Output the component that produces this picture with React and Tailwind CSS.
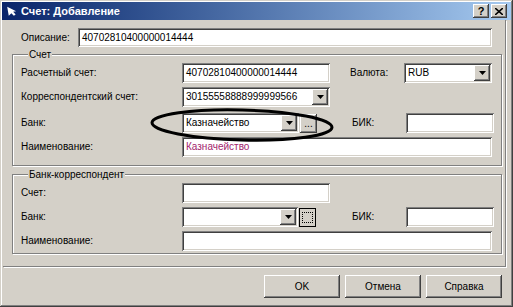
import React from 'react';

const sunken = 'bg-white shadow-[inset_1px_1px_0_#808080,inset_-1px_-1px_0_#fff,inset_2px_2px_0_#404040,inset_-2px_-2px_0_#d4d0c8]';
const raised = 'bg-[#d4d0c8] shadow-[inset_-1px_-1px_0_#404040,inset_1px_1px_0_#fff,inset_-2px_-2px_0_#808080]';

const Field = ({ value = '', className = '', textClass = 'text-black' }) => (
    <div className={`${sunken} h-[20px] flex items-center pl-[4px] ${className}`}>
        <span className={`text-[10px] leading-none ${textClass}`}>{value}</span>
    </div>
);

const Arrow = () => (
    <div className={`${raised} w-[16px] h-[16px] flex items-center justify-center shrink-0`}>
        <svg width="7" height="4" viewBox="0 0 7 4"><path d="M0 0h7L3.5 4z" fill="#000" /></svg>
    </div>
);

const Combo = ({ value = '', className = '' }) => (
    <div className={`${sunken} h-[20px] flex items-center pl-[4px] pr-[2px] ${className}`}>
        <span className="text-[10px] leading-none flex-1">{value}</span>
        <Arrow />
    </div>
);

const Label = ({ children, className = 'w-[161px]' }) => (
    <span className={`text-[10px] leading-none text-black shrink-0 ${className}`}>{children}</span>
);

const Group = ({ title, children, className = '' }) => (
    <fieldset className={`border border-[#808080] shadow-[inset_1px_1px_0_#fff,1px_1px_0_#fff] w-[488px] pl-[8px] pr-[7px] ${className}`}>
        <legend className="ml-[7px] px-px bg-[#d4d0c8] text-[10px] leading-[13px] text-black">{title}</legend>
        {children}
    </fieldset>
);

const Button = ({ children }) => (
    <div className={`${raised} w-[76px] h-[23px] flex items-center justify-center text-[10px] text-black`}>{children}</div>
);

export default function App() {
    return (
        <div className="w-[513px] h-[307px] bg-[#d4d0c8] relative overflow-hidden flex flex-col shadow-[inset_-1px_-1px_0_#404040,inset_1px_1px_0_#d4d0c8,inset_-2px_-2px_0_#808080,inset_2px_2px_0_#fff]" style={{ fontFamily: '"Liberation Sans", Arial, sans-serif' }}>
            {/* Title bar */}
            <div className="mx-[2px] mt-[2px] h-[18px] shrink-0 bg-gradient-to-r from-[#0a246a] to-[#a6caf0] flex items-center pl-[5px] pr-[4px]">
                <svg width="10" height="10" viewBox="0 0 10 10" className="shrink-0">
                    <path d="M1 0 L9 6 L6 6 L8 9 L6 10 L4 7 L1 9 Z" fill="#fff" transform="rotate(-10 5 5)" />
                </svg>
                <span className="ml-[4px] text-[11px] font-bold text-white flex-1">Счет: Добавление</span>
                <div className="flex gap-[2px]">
                    <div className={`${raised} w-[16px] h-[14px] flex items-center justify-center text-[11px] font-bold leading-none`}>?</div>
                    <div className={`${raised} w-[16px] h-[14px] flex items-center justify-center`}>
                        <svg width="8" height="7" viewBox="0 0 8 7"><path d="M0 0l8 7M8 0L0 7" stroke="#000" strokeWidth="1.6" /></svg>
                    </div>
                </div>
            </div>

            {/* Main panel */}
            <div className="ml-[3px] w-[503px] h-[247px] shrink-0 border-r border-b border-[#808080] shadow-[1px_1px_0_#fff] pl-[9px] pt-[8px]">
                <div className="flex items-center h-[19px]">
                    <Label className="w-[66px] pl-[9px]">Описание:</Label>
                    <Field value="40702810400000014444" className="w-[414px] !h-[19px]" />
                </div>

                <Group title="Счет" className="mt-[1px] pt-[2px] pb-[8px]">
                    <div className="flex items-center h-[20px]">
                        <Label>Расчетный счет:</Label>
                        <Field value="40702810400000014444" className="w-[148px]" />
                        <Label className="w-[54px] ml-[20px]">Валюта:</Label>
                        <Combo value="RUB" className="w-[88px]" />
                    </div>
                    <div className="flex items-center h-[20px] mt-[4px]">
                        <Label>Корреспондентский счет:</Label>
                        <Combo value="30155558888999999566" className="w-[148px]" />
                    </div>
                    <div className="flex items-center h-[20px] mt-[6px]">
                        <Label>Банк:</Label>
                        <Combo value="Казначейство" className="w-[117px]" />
                        <div className={`${raised} w-[17px] h-[19px] ml-px flex items-end justify-center pb-[4px] text-[10px] leading-none`}>...</div>
                        <Label className="w-[54px] ml-[35px]">БИК:</Label>
                        <Field className="w-[88px]" />
                    </div>
                    <div className="flex items-center h-[20px] mt-[4px]">
                        <Label>Наименование:</Label>
                        <Field value="Казначейство" className="w-[310px]" textClass="text-[#a3246e]" />
                    </div>
                </Group>

                <Group title="Банк-корреспондент" className="mt-[2px] pt-[2px] pb-[2px]">
                    <div className="flex items-center h-[20px]">
                        <Label>Счет:</Label>
                        <Field className="w-[148px]" />
                    </div>
                    <div className="flex items-center h-[20px] mt-[4px]">
                        <Label>Банк:</Label>
                        <Combo className="w-[116px]" />
                        <div className="w-[17px] h-[19px] ml-px bg-[#d4d0c8] border border-black flex items-center justify-center">
                            <div className="w-[11px] h-[11px] border border-dotted border-black" />
                        </div>
                        <Label className="w-[54px] ml-[36px]">БИК:</Label>
                        <Field className="w-[88px]" />
                    </div>
                    <div className="flex items-center h-[20px] mt-[4px]">
                        <Label>Наименование:</Label>
                        <Field className="w-[310px]" />
                    </div>
                </Group>
            </div>

            {/* Buttons */}
            <div className="flex justify-end gap-[5px] pr-[11px] mt-[8px]">
                <Button>OK</Button>
                <Button>Отмена</Button>
                <Button>Справка</Button>
            </div>

            {/* Hand-drawn annotation ellipse */}
            <svg className="absolute left-[146px] top-[106px] pointer-events-none" width="192" height="40" viewBox="0 0 192 40">
                <ellipse cx="96" cy="19" rx="90" ry="15" fill="none" stroke="#000" strokeWidth="3" transform="rotate(1.5 96 19)" />
            </svg>
        </div>
    );
}
